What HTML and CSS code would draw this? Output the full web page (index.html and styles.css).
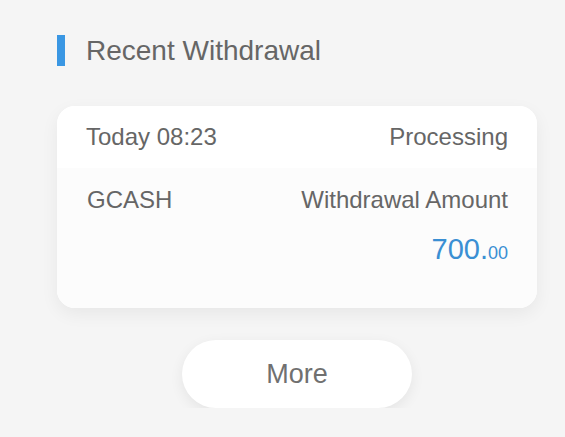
FILE: index.html
```html
<!DOCTYPE html>
<html>
<head>
<meta charset="utf-8">
<link rel="stylesheet" href="styles.css">
</head>
<body>
<div class="page">
  <div class="section-title">
    <span class="bar"></span>
    <span class="title-text">Recent Withdrawal</span>
  </div>
  <div class="card">
    <div class="card-head">
      <span class="time">Today 08:23</span>
      <span class="status">Processing</span>
    </div>
    <div class="card-body">
      <div class="row">
        <span class="method">GCASH</span>
        <span class="label">Withdrawal Amount</span>
      </div>
      <div class="amount"><span class="int">700.</span><span class="dec">00</span></div>
    </div>
  </div>
  <div class="more-wrap">
    <button class="more">More</button>
  </div>
</div>
</body>
</html>
```
FILE: styles.css
```css
html, body {
  margin: 0;
  padding: 0;
  background: #f5f5f5;
  font-family: "Liberation Sans", Arial, sans-serif;
  color: #666;
}
.page {
  width: 480px;
  padding: 35px 0 0 57px;
}
.section-title {
  display: flex;
  align-items: center;
  height: 31px;
}
.bar {
  width: 8px;
  height: 31px;
  background: #3a97e3;
}
.title-text {
  margin-left: 21px;
  font-size: 28px;
  color: #666;
}
.card {
  margin-top: 40px;
  background: #fff;
  border-radius: 18px;
  box-shadow: 0 6px 18px rgba(0, 0, 0, 0.06);
  overflow: hidden;
}
.card-head {
  display: flex;
  justify-content: space-between;
  align-items: center;
  height: 62px;
  padding: 0 29px;
  font-size: 24px;
  background: #fff;
}
.card-body {
  background: #fcfcfc;
  padding: 16px 29px 38px 30px;
  height: 86px;
}
.row {
  display: flex;
  justify-content: space-between;
  font-size: 24px;
  line-height: 32px;
}
.amount {
  margin-top: 17px;
  text-align: right;
  color: #3a8fd3;
  line-height: 32px;
}
.int {
  font-size: 29px;
}
.dec {
  font-size: 18px;
}
.more-wrap {
  display: flex;
  justify-content: center;
  margin-top: 32px;
}
.more {
  width: 230px;
  height: 68px;
  border: none;
  border-radius: 34px;
  background: #fff;
  box-shadow: 0 4px 14px rgba(0, 0, 0, 0.07);
  font-family: "Liberation Sans", Arial, sans-serif;
  font-size: 27px;
  color: #707070;
}
```
